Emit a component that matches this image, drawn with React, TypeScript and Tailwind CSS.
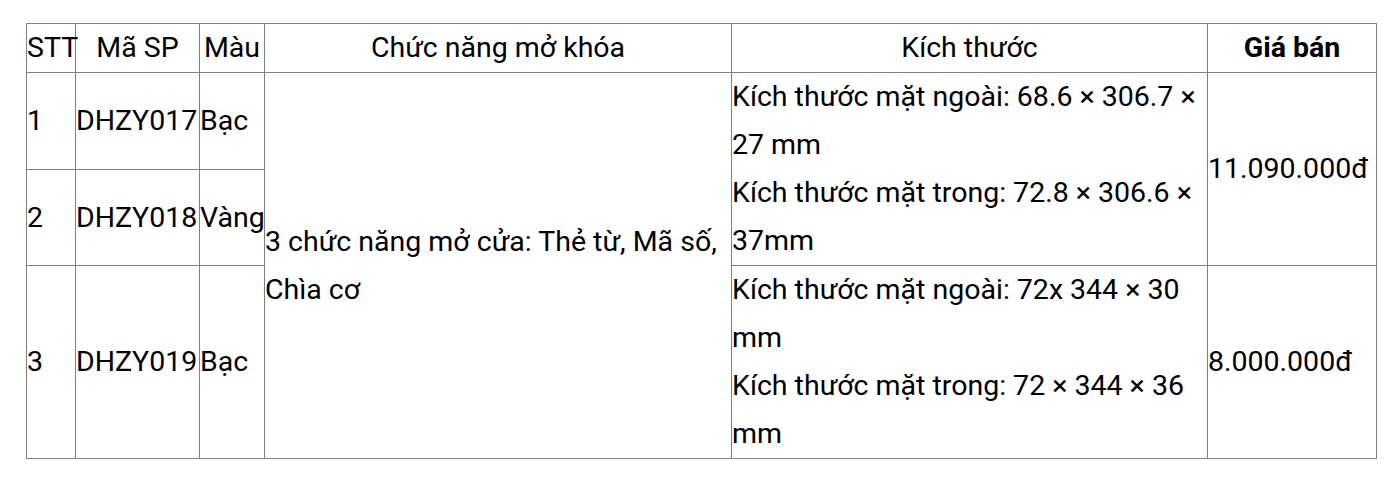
const cell = "border border-[#808080] p-0 align-middle font-normal";

export default function App() {
  return (
    <div className="min-h-screen bg-white pl-[26px] pt-[23px] text-black font-['Roboto','Liberation_Sans',sans-serif] text-[28.5px] leading-[48px]">
      <table className="table-fixed border-collapse w-[1350px]">
        <colgroup>
          <col className="w-[49px]" />
          <col className="w-[124px]" />
          <col className="w-[65px]" />
          <col className="w-[467px]" />
          <col className="w-[476px]" />
          <col className="w-[169px]" />
        </colgroup>
        <thead>
          <tr>
            <th className={`${cell} text-left`}>STT</th>
            <th className={`${cell} text-center`}>Mã SP</th>
            <th className={`${cell} text-center`}>Màu</th>
            <th className={`${cell} text-center`}>Chức năng mở khóa</th>
            <th className={`${cell} text-center`}>Kích thước</th>
            <th className={`${cell} text-center !font-bold`}>Giá bán</th>
          </tr>
        </thead>
        <tbody>
          <tr className="h-[97px]">
            <td className={cell}>1</td>
            <td className={cell}>DHZY017</td>
            <td className={cell}>Bạc</td>
            <td className={cell} rowSpan={3}>
              3 chức năng mở cửa: Thẻ từ, Mã số,
              <br />
              Chìa cơ
            </td>
            <td className={`${cell} whitespace-nowrap`} rowSpan={2}>
              <p>
                Kích thước mặt ngoài: 68.6 × 306.7 ×<br />27 mm
              </p>
              <p>
                Kích thước mặt trong: 72.8 × 306.6 ×<br />37mm
              </p>
            </td>
            <td className={cell} rowSpan={2}>11.090.000đ</td>
          </tr>
          <tr className="h-[96px]">
            <td className={cell}>2</td>
            <td className={cell}>DHZY018</td>
            <td className={cell}>Vàng</td>
          </tr>
          <tr>
            <td className={cell}>3</td>
            <td className={cell}>DHZY019</td>
            <td className={cell}>Bạc</td>
            <td className={`${cell} whitespace-nowrap`}>
              <p>
                Kích thước mặt ngoài: 72x 344 × 30<br />mm
              </p>
              <p>
                Kích thước mặt trong: 72 × 344 × 36<br />mm
              </p>
            </td>
            <td className={cell}>8.000.000đ</td>
          </tr>
        </tbody>
      </table>
    </div>
  );
}
